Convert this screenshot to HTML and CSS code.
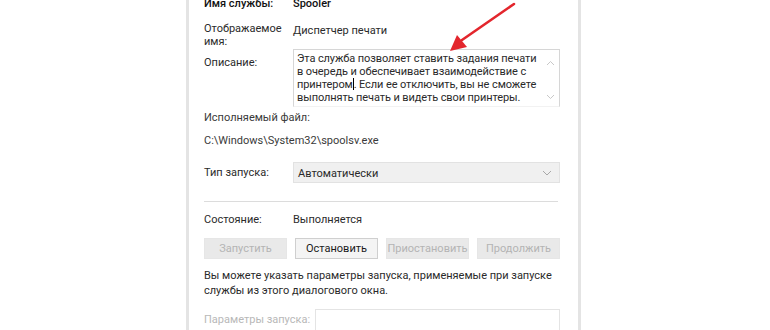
FILE: index.html
```html
<!DOCTYPE html>
<html lang="ru">
<head>
    <meta charset="UTF-8">
    <title>Свойства: Диспетчер печати</title>

    <link rel="stylesheet" href="styles.css">
</head>
<body>
<div class="dialog">
    <div class="row top-row">
        <div class="label">Имя службы:</div>
        <div class="value">Spooler</div>
    </div>

    <div class="row display-row">
        <div class="label">Отображаемое имя:</div>
        <div class="value">Диспетчер печати</div>
    </div>

    <div class="row desc-row">
        <div class="label desc-label">Описание:</div>
        <div class="textbox">
            <div class="textbox-text">Эта служба позволяет ставить задания печати в очередь и обеспечивает взаимодействие с принтером<span class="caret"></span>. Если ее отключить, вы не сможете выполнять печать и видеть свои принтеры.</div>
            <div class="scroll">
                <svg width="9" height="6" viewBox="0 0 9 6"><path d="M1 5 L4.5 1.5 L8 5" fill="none" stroke="#c8c8c8" stroke-width="1"/></svg>
                <svg width="9" height="6" viewBox="0 0 9 6"><path d="M1 1 L4.5 4.5 L8 1" fill="none" stroke="#c8c8c8" stroke-width="1"/></svg>
            </div>
        </div>
    </div>

    <div class="line exe-label">Исполняемый файл:</div>
    <div class="line exe-path">C:\Windows\System32\spoolsv.exe</div>

    <div class="row startup-row">
        <div class="label">Тип запуска:</div>
        <div class="select">
            <span>Автоматически</span>
            <svg width="10" height="6" viewBox="0 0 10 6"><path d="M1 1 L5 5 L9 1" fill="none" stroke="#a8a8a8" stroke-width="1"/></svg>
        </div>
    </div>

    <div class="separator"></div>

    <div class="row state-row">
        <div class="label">Состояние:</div>
        <div class="value">Выполняется</div>
    </div>

    <div class="buttons">
        <button class="btn" disabled>Запустить</button>
        <button class="btn btn-active">Остановить</button>
        <button class="btn" disabled>Приостановить</button>
        <button class="btn" disabled>Продолжить</button>
    </div>

    <p class="hint">Вы можете указать параметры запуска, применяемые при запуске службы из этого диалогового окна.</p>

    <div class="row params-row">
        <div class="params-label">Параметры запуска:</div>
        <div class="params-input"></div>
    </div>
</div>

<!-- red pointer drawn over the screenshot -->
<svg class="pointer" width="120" height="70" viewBox="0 0 120 70">
    <line x1="110" y1="4" x2="58" y2="40" stroke="#e3262d" stroke-width="2.6" stroke-linecap="round"/>
    <polygon points="46,51 53,35 63,47" fill="#e3262d"/>
</svg>
</body>
</html>
```

FILE: styles.css
```css
body {
    margin: 0;
    background: #fff;
    font-family: Roboto, "Noto Sans", sans-serif;
    font-size: 11px;
    line-height: 13px;
    color: #2a2a2a;
    overflow: hidden;
}

.dialog {
    width: 356px;
    height: 340px;
    margin: -3px 0 0 186px;
    padding: 0 18px 0 15px;
    border-left: 3px solid #e4e4e4;
    border-right: 3px solid #e4e4e4;
}

.row {
    display: flex;
    align-items: flex-start;
}

.label {
    width: 89px;
    flex-shrink: 0;
}

.top-row {
    font-weight: 500;
    color: #111;
}

.display-row {
    margin-top: 12px;
}

.display-row .label {
    width: 84px;
    margin-right: 5px;
}

.display-row .value {
    margin-top: 2px;
}

.desc-row {
    margin-top: 1px;
}

.desc-label {
    margin-top: 7px;
}

.textbox {
    flex: 1;
    display: flex;
    height: 54px;
    border: 1px solid #d6d6d6;
    border-bottom-color: #f2f2f2;
    padding: 2px 0 0 3px;
}

.textbox-text {
    flex: 1;
    line-height: 13px;
    letter-spacing: -0.1px;
}

.caret {
    display: inline-block;
    width: 0;
    height: 12px;
    border-left: 1px solid #000;
    vertical-align: -2px;
}

.scroll {
    width: 17px;
    display: flex;
    flex-direction: column;
    justify-content: space-between;
    align-items: center;
    padding: 8px 0 6px;
}

.line {
    margin-top: 10px;
}

.exe-label {
    margin-top: 4px;
    color: #3a3a3a;
}

.exe-path {
    color: #3a3a3a;
}

.startup-row {
    margin-top: 15px;
    align-items: center;
}

.select {
    flex: 1;
    height: 19px;
    display: flex;
    align-items: center;
    justify-content: space-between;
    padding: 0 7px 0 4px;
    background: #f0f0f0;
    border: 1px solid #e2e2e2;
}

.select span {
    margin-top: 2px;
}

.separator {
    height: 1px;
    background: #dcdcdc;
    margin: 18px 2px 0 0;
}

.state-row {
    margin-top: 11px;
}

.buttons {
    display: grid;
    grid-template-columns: repeat(4, 1fr);
    gap: 8px;
    margin-top: 12px;
}

.btn {
    height: 21px;
    font-family: inherit;
    font-size: 11px;
    padding: 0;
    border: 1px solid #e6e6e6;
    background: #e9e9e9;
    color: #b4b4b4;
}

.btn-active {
    background: #f4f4f4;
    border-color: #cfcfcf;
    color: #1a1a1a;
}

.hint {
    margin: 9px 0 0;
    line-height: 15px;
}

.params-row {
    margin-top: 11px;
}

.params-label {
    width: 111px;
    flex-shrink: 0;
    margin-top: 4px;
    white-space: nowrap;
    color: #b8b8b8;
}

.params-input {
    flex: 1;
    height: 24px;
    border: 1px solid #e4e4e4;
}

.pointer {
    position: absolute;
    left: 404px;
    top: 0;
}
```
